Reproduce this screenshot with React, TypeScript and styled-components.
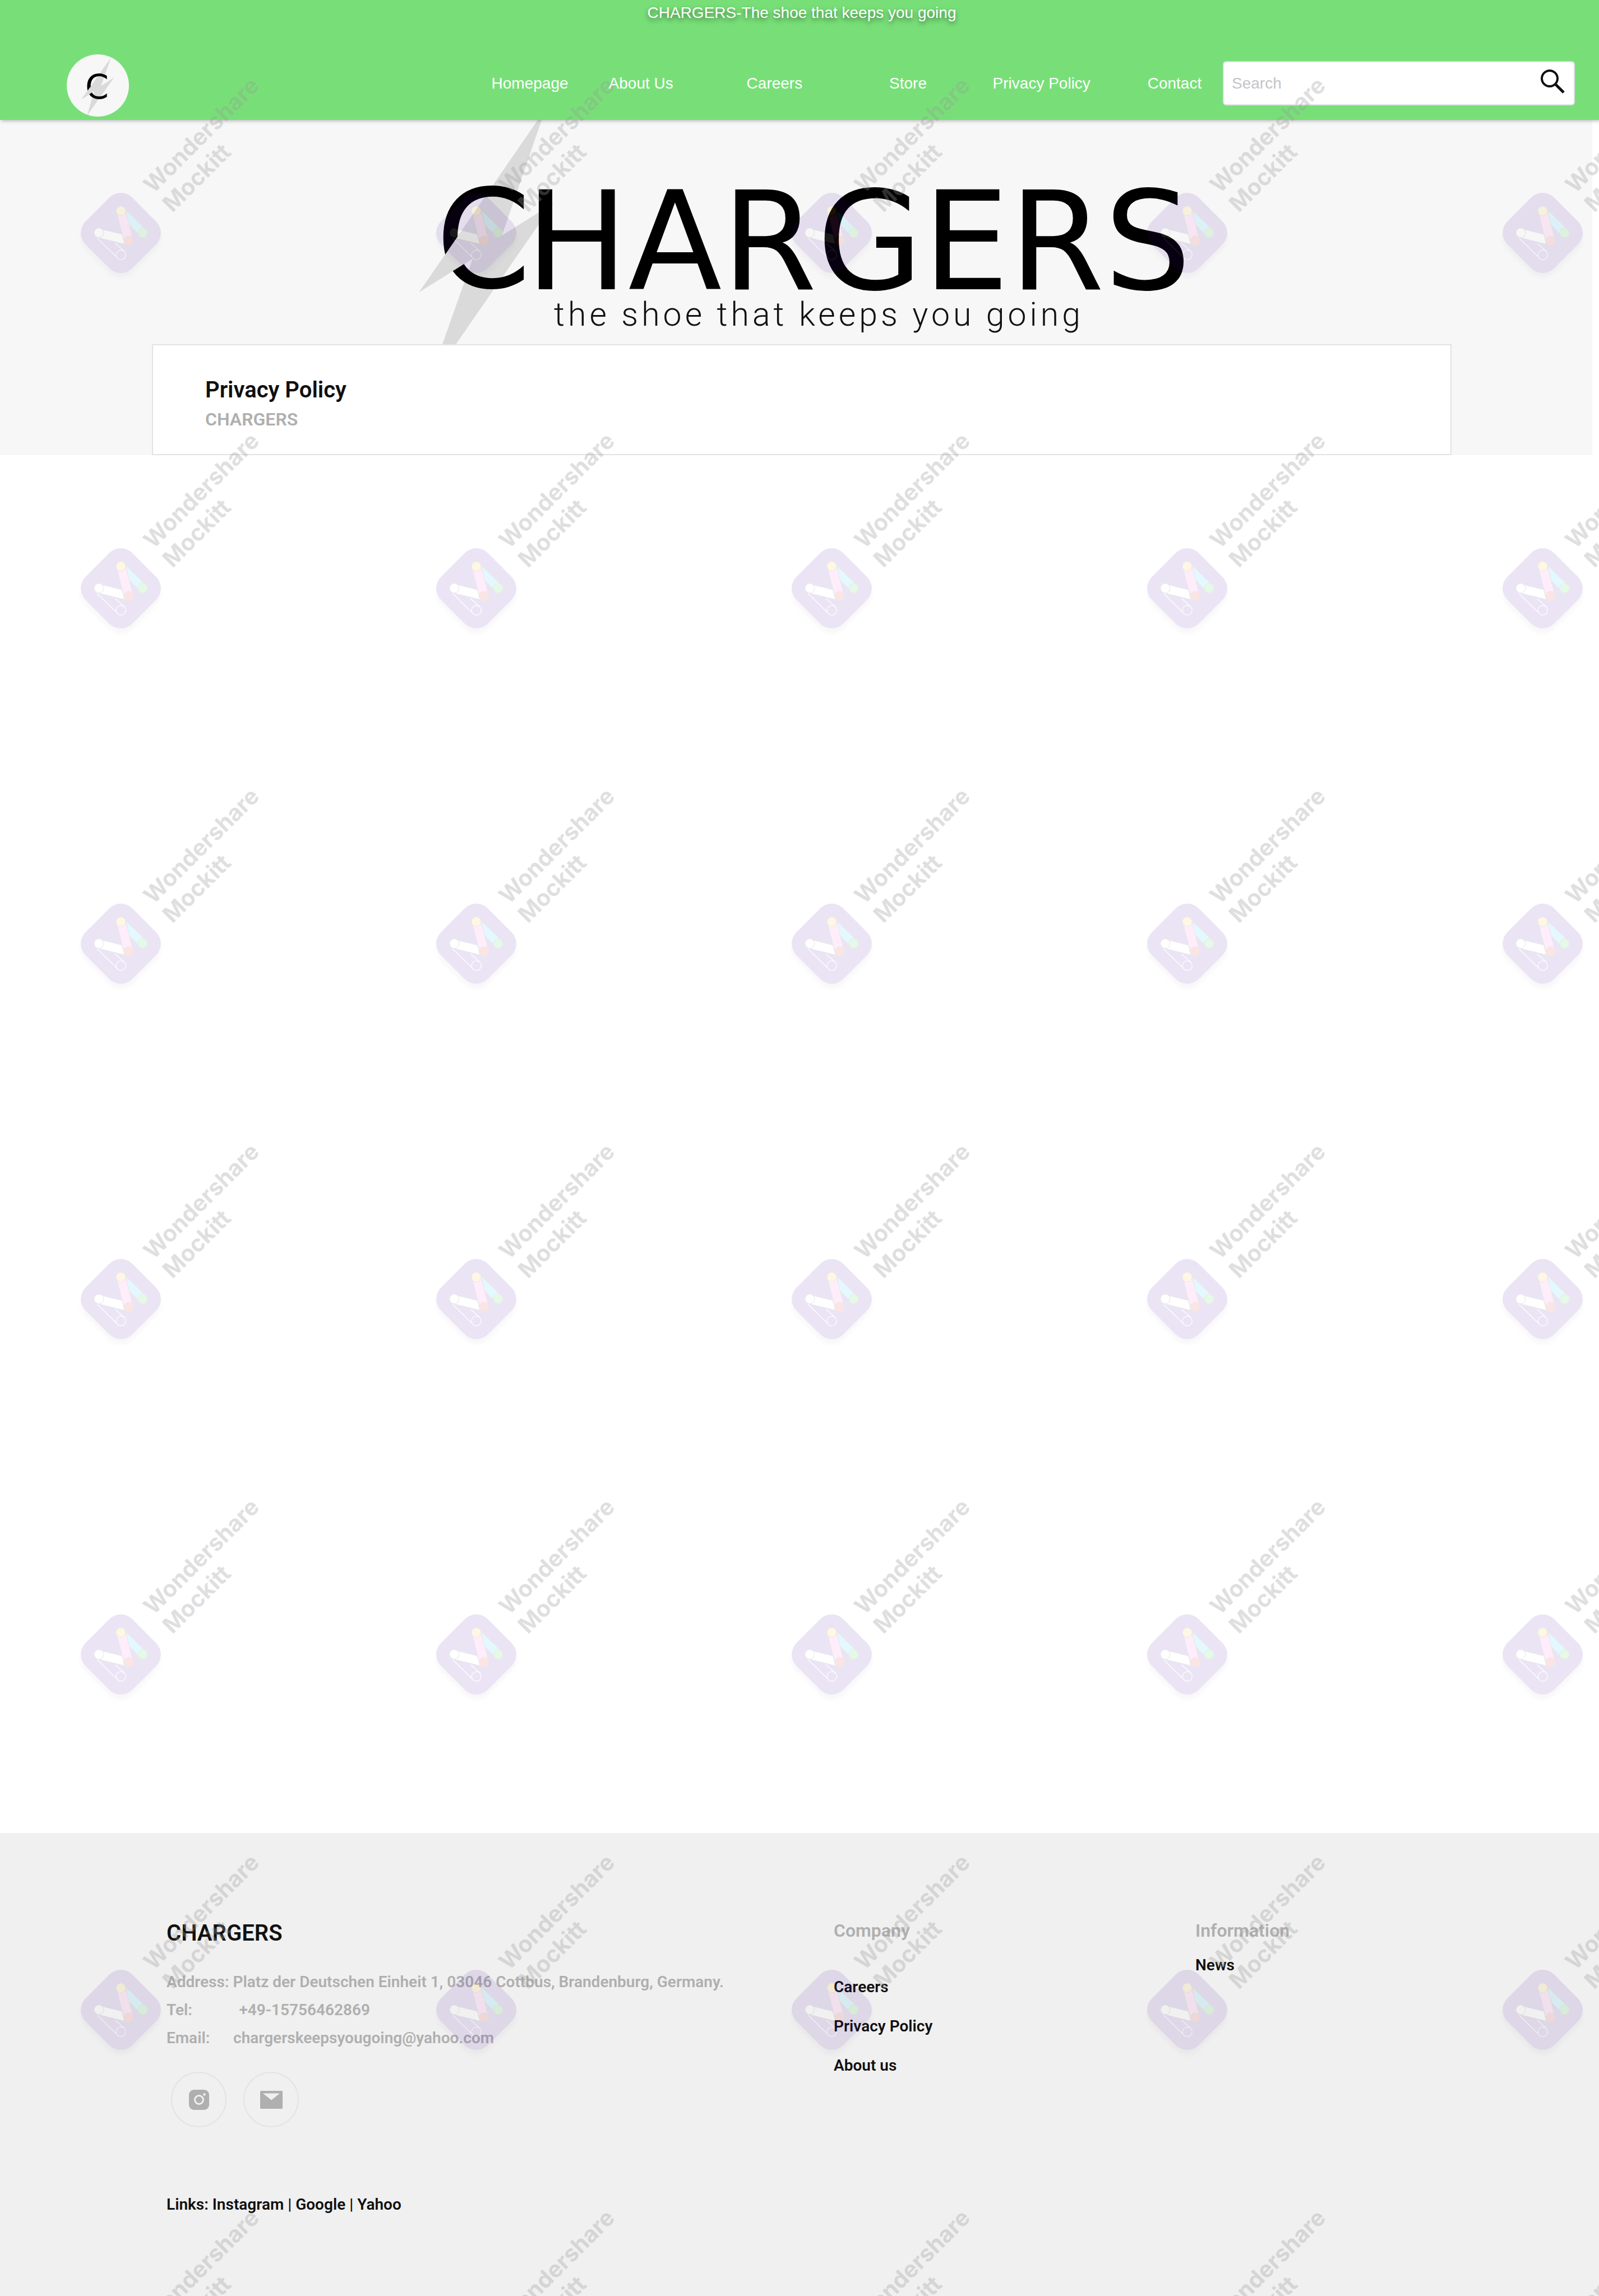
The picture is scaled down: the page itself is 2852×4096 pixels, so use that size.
import React from "react";
import styled, { createGlobalStyle } from "styled-components";

const color = {
  green: "#78df78",
  ink: "#101010",
  muted: "#afafaf",
  line: "#e3e3e3",
  hero: "#f7f7f7",
  footer: "#f0f0f0",
  bolt: "#dadada",
};

const GlobalStyle = createGlobalStyle`
  *, *::before, *::after { box-sizing: border-box; }
  body {
    margin: 0;
    background: #fff;
    color: ${color.ink};
    font-family: Roboto, "Liberation Sans", sans-serif;
  }
  h1, h2, h3, p, ul { margin: 0; padding: 0; }
  ul { list-style: none; }
  a { color: inherit; text-decoration: none; }
`;

const Page = styled.div`
  position: relative;
  display: flex;
  flex-direction: column;
  min-height: 100vh;
`;

/* ---------- header ---------- */

const Header = styled.header`
  position: relative;
  padding: 7px 43px 6px 119px;
  background: ${color.green};
  box-shadow: 2px 2px 6px rgba(0, 0, 0, 0.25);
  color: #fff;
  font-family: "Liberation Sans", Arial, sans-serif;
  font-size: 28px;
  line-height: 32px;
`;

const Slogan = styled.p`
  padding-right: 68px;
  text-align: center;
  text-shadow: 0 4px 8px rgba(0, 0, 0, 0.5);
`;

const Bar = styled.div`
  display: flex;
  align-items: center;
  justify-content: space-between;
  padding-top: 58px;
`;

const Badge = styled.a`
  display: block;
  width: 111px;
  height: 111px;
  border-radius: 50%;
  overflow: hidden;
  background: ${color.hero};

  svg {
    display: block;
  }
`;

const Tools = styled.div`
  display: flex;
  flex: 0 1 1943px;
  align-items: center;
  gap: 7px;
  margin-bottom: 8px;
`;

const Nav = styled.nav`
  display: grid;
  flex: 1;
  grid-template-columns: 158fr repeat(4, 238fr) 39fr 158fr;
`;

const NavLink = styled.a`
  text-align: center;
  white-space: nowrap;

  &:last-child {
    grid-column: 7;
  }
`;

const SearchBox = styled.form`
  display: flex;
  flex: 0 1 628px;
  height: 79px;
  padding: 0 16px 0 14px;
  border: 2px solid #dcdfe6;
  border-radius: 6px;
  background: #fff;
`;

const SearchInput = styled.input`
  flex: 1;
  min-width: 0;
  padding: 0;
  border: 0;
  outline: 0;
  background: transparent;
  color: ${color.ink};
  font: inherit;

  &::placeholder {
    color: #c3c3c8;
    opacity: 1;
  }
`;

const SearchButton = styled.button`
  align-self: flex-start;
  padding: 12px 0 0;
  border: 0;
  background: none;
  cursor: pointer;

  svg {
    display: block;
  }
`;

/* ---------- hero ---------- */

const Hero = styled.section`
  margin-right: 12px;
  padding: 0 251px 0 271px;
  background: ${color.hero};
`;

const HeroLogo = styled.svg`
  display: block;
  width: 1400px;
  max-width: 100%;
  height: 400px;
  margin-left: 469px;
`;

const TitleCard = styled.div`
  padding: 56px 93px 42px;
  border: 2px solid ${color.line};
  background: #fff;
`;

const Title = styled.h1`
  font-size: 40px;
  font-weight: 600;
  line-height: 48px;
`;

const Subtitle = styled.p`
  margin-top: 8px;
  color: ${color.muted};
  font-size: 32px;
  font-weight: 600;
  line-height: 40px;
`;

const Main = styled.main`
  flex: 1;
`;

/* ---------- footer ---------- */

const Footer = styled.footer`
  display: grid;
  grid-template-columns: 1190fr 645fr 720fr;
  padding: 155px 0 146px 297px;
  background: ${color.footer};
  font-size: 28px;
  font-weight: 600;
`;

const Brand = styled.h2`
  margin-bottom: 38px;
  font-size: 40px;
  font-weight: 600;
  line-height: 48px;
`;

const ContactLine = styled.p`
  color: ${color.muted};
  line-height: 50px;
  white-space: pre;
`;

const Social = styled.div`
  display: flex;
  gap: 30px;
  margin: 35px 0 121px 8px;
`;

const SocialLink = styled.a`
  display: flex;
  align-items: center;
  justify-content: center;
  width: 99px;
  height: 99px;
  border: 2px solid ${color.line};
  border-radius: 50%;
`;

const LinksLine = styled.p`
  line-height: 34px;
`;

const ColumnTitle = styled.h3<{ $gap: number }>`
  margin-bottom: ${(p) => p.$gap}px;
  color: ${color.muted};
  font-size: 32px;
  font-weight: 600;
  line-height: 38px;
`;

const ColumnItem = styled.li`
  line-height: 70px;
`;

/* ---------- watermark overlay ---------- */

const Overlay = styled.div`
  position: absolute;
  inset: 0;
  display: grid;
  grid-template-columns: repeat(5, 634px);
  grid-auto-rows: 634px;
  overflow: hidden;
  pointer-events: none;
`;

const Tile = styled.div`
  position: relative;
`;

const TileLogo = styled.svg`
  position: absolute;
  top: 343px;
  left: 143px;
  width: 145px;
  height: 145px;
  overflow: visible;
  opacity: 0.1;
  filter: drop-shadow(0 9px 4px rgba(0, 0, 0, 0.3));
`;

const TileText = styled.div`
  position: absolute;
  top: 319px;
  left: 246px;
  transform: rotate(-45deg);
  transform-origin: 0 0;
  color: rgba(155, 155, 155, 0.31);
  font-family: Inter, "Liberation Sans", sans-serif;
  font-size: 41px;
  font-weight: 700;
  line-height: 48px;
  white-space: nowrap;
`;

function BadgeLogo() {
  return (
    <svg width="111" height="111" viewBox="0 0 111 111" role="img" aria-label="Chargers">
      <polygon
        points="79.2,5.3 61.1,56.4 84.8,41 36.1,109.4 49.1,65.2 26.4,80.2"
        fill={color.bolt}
      />
      <text x="33" y="79" fontSize="60" fontFamily="DejaVu Sans, sans-serif" fill="#000">
        C
      </text>
      <polygon points="26.4,80.2 42,58 49.1,65.2" fill={color.bolt} />
    </svg>
  );
}

function WordLogo() {
  return (
    <HeroLogo viewBox="0 0 1400 400" role="img" aria-label="Chargers, the shoe that keeps you going">
      <polygon
        points="233,-20 155.3,206 247.2,148.4 23.4,472 103.2,247.2 7.8,307"
        fill={color.bolt}
      />
      <g fontFamily="DejaVu Sans, sans-serif" fontSize="244" fill="#000">
        <text x="37" y="299">C</text>
        <text x="197" y="302">HARGERS</text>
      </g>
      <polygon points="7.8,307 80.5,201.7 103.2,247.2" fill={color.bolt} />
      <text
        x="248"
        y="367"
        fontFamily="Roboto, sans-serif"
        fontWeight="300"
        fontSize="59"
        letterSpacing="6"
        fill="#111"
      >
        the shoe that keeps you going
      </text>
    </HeroLogo>
  );
}

function SearchIcon() {
  return (
    <svg width="44" height="44" viewBox="0 0 44 44" fill="none" stroke={color.ink} aria-hidden="true">
      <circle cx="17" cy="17" r="14" strokeWidth="4" />
      <path d="M27 27 42 42" strokeWidth="5" />
    </svg>
  );
}

function InstagramIcon() {
  return (
    <svg width="36" height="36" viewBox="0 0 36 36" aria-hidden="true">
      <rect width="36" height="36" rx="9" fill={color.muted} />
      <circle cx="18" cy="18" r="7.5" fill="none" stroke={color.footer} strokeWidth="3" />
      <circle cx="27.5" cy="8.5" r="2.2" fill={color.footer} />
    </svg>
  );
}

function MailIcon() {
  return (
    <svg width="40" height="32" viewBox="0 0 40 32" aria-hidden="true">
      <rect width="40" height="32" rx="1.5" fill={color.muted} />
      <path d="M5 4.5H35L20 16.5Z" fill={color.footer} />
    </svg>
  );
}

function MockittMark() {
  return (
    <TileLogo viewBox="0 0 220 220">
      <rect
        x="20.5"
        y="20.5"
        width="179"
        height="179"
        rx="44"
        transform="rotate(45 110 110)"
        fill="#3c05a5"
      />
      <g fill="none" stroke="#fff" strokeWidth="2">
        <path d="M46.4 124.4 98 175" />
        <path d="M95 138.2 120 160" />
        <circle cx="110.3" cy="169.5" r="13" />
      </g>
      <g stroke="#33402a" strokeWidth="1.6">
        <path d="M124.5 49.3 171.6 94.7 155.5 111.3 131.4 86.8Z" fill="#00c3ff" />
        <path d="M55 99.5 113 113.7 119.9 140.2 52 123.5Z" fill="#fff" />
        <path d="M98.9 55 123.7 52 142 125 118 130Z" fill="#ff55e1" />
        <circle cx="110" cy="50.4" r="13" fill="#ffb905" />
        <circle cx="50.6" cy="109.8" r="13" fill="#fff" />
        <circle cx="131.4" cy="131.1" r="13" fill="#eb0505" />
        <circle cx="169.3" cy="109.8" r="13" fill="#00cd19" />
      </g>
    </TileLogo>
  );
}

const navItems = ["Homepage", "About Us", "Careers", "Store", "Privacy Policy", "Contact"];
const companyItems = ["Careers", "Privacy Policy", "About us"];
const tiles = Array.from({ length: 35 }, (_, i) => i);

export default function App() {
  return (
    <Page>
      <GlobalStyle />
      <Header>
        <Slogan>CHARGERS-The shoe that keeps you going</Slogan>
        <Bar>
          <Badge href="#">
            <BadgeLogo />
          </Badge>
          <Tools>
            <Nav aria-label="Main">
              {navItems.map((item) => (
                <NavLink key={item} href="#">
                  {item}
                </NavLink>
              ))}
            </Nav>
            <SearchBox role="search" onSubmit={(e) => e.preventDefault()}>
              <SearchInput type="text" placeholder="Search" aria-label="Search" />
              <SearchButton type="submit" aria-label="Submit search">
                <SearchIcon />
              </SearchButton>
            </SearchBox>
          </Tools>
        </Bar>
      </Header>

      <Main>
        <Hero>
          <WordLogo />
          <TitleCard>
            <Title>Privacy Policy</Title>
            <Subtitle>CHARGERS</Subtitle>
          </TitleCard>
        </Hero>
      </Main>

      <Footer>
        <div>
          <Brand>CHARGERS</Brand>
          <ContactLine>
            Address: Platz der Deutschen Einheit 1, 03046 Cottbus, Brandenburg, Germany.
          </ContactLine>
          <ContactLine>{"Tel:" + " ".repeat(12) + "+49-15756462869"}</ContactLine>
          <ContactLine>{"Email:" + " ".repeat(6) + "chargerskeepsyougoing@yahoo.com"}</ContactLine>
          <Social>
            <SocialLink href="#" aria-label="Instagram">
              <InstagramIcon />
            </SocialLink>
            <SocialLink href="#" aria-label="Email">
              <MailIcon />
            </SocialLink>
          </Social>
          <LinksLine>
            Links: <a href="#">Instagram</a> | <a href="#">Google</a> | <a href="#">Yahoo</a>
          </LinksLine>
        </div>
        <div>
          <ColumnTitle $gap={47}>Company</ColumnTitle>
          <ul>
            {companyItems.map((item) => (
              <ColumnItem key={item}>
                <a href="#">{item}</a>
              </ColumnItem>
            ))}
          </ul>
        </div>
        <div>
          <ColumnTitle $gap={8}>Information</ColumnTitle>
          <ul>
            <ColumnItem>
              <a href="#">News</a>
            </ColumnItem>
          </ul>
        </div>
      </Footer>

      <Overlay aria-hidden="true">
        {tiles.map((i) => (
          <Tile key={i}>
            <MockittMark />
            <TileText>
              Wondershare
              <br />
              Mockitt
            </TileText>
          </Tile>
        ))}
      </Overlay>
    </Page>
  );
}
